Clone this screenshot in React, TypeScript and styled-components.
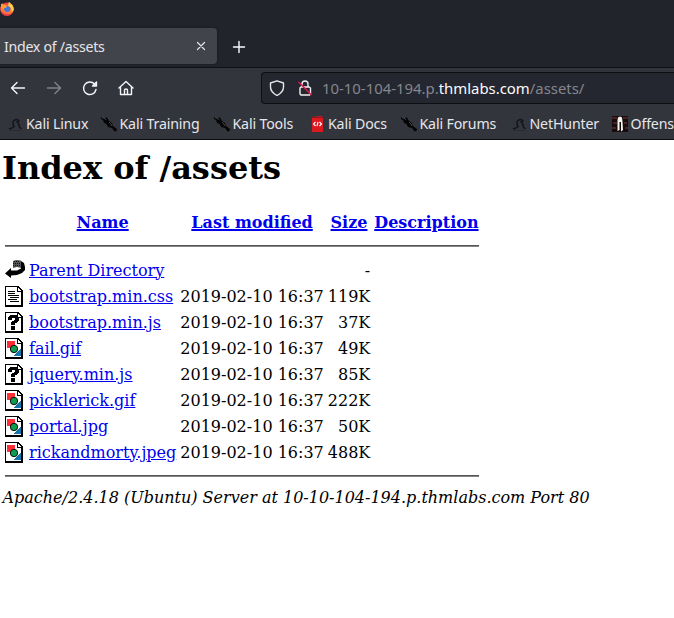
import React from 'react';
import styled, { createGlobalStyle } from 'styled-components';

const Global = createGlobalStyle`
  html, body { margin: 0; padding: 0; background: #fff; }
  body { overflow: hidden; }
`;

const Window = styled.div`
  width: 674px;
  height: 618px;
  overflow: hidden;
  background: #fff;
`;

const Chrome = styled.header`
  font: 14.2px/20px 'Noto Sans', sans-serif;
  letter-spacing: -0.16px;
  color: #e6e6ea;
  background: #33353d;
`;

const TitleBar = styled.div`
  height: 28px;
  background: #22242c;
  svg { display: block; }
`;

const TabStrip = styled.div`
  display: flex;
  height: 39px;
  background: #22242c;
  border-bottom: 1px solid #0f1014;
`;

const Tab = styled.div`
  box-sizing: border-box;
  display: flex;
  align-items: center;
  justify-content: space-between;
  width: 217px;
  height: 36px;
  padding: 0 9px 0 4px;
  border-radius: 0 4px 4px 0;
  background: #42444b;
  box-shadow: 0 0 3px rgba(0, 0, 0, 0.35);
`;

const TabTitle = styled.span`
  padding-top: 2px;
  letter-spacing: -0.29px;
`;

const NewTab = styled.div`
  padding: 11px 0 0 14px;
  line-height: 0;
  color: #fbfbfe;
`;

const NavBar = styled.nav`
  display: flex;
  align-items: center;
  height: 40px;
`;

const NavButton = styled.div<{ $dim?: boolean }>`
  display: flex;
  flex: 0 0 36px;
  justify-content: center;
  color: #f5f5f7;
  opacity: ${(p) => (p.$dim ? 0.4 : 1)};
`;

const AddressBar = styled.div`
  box-sizing: border-box;
  display: flex;
  align-items: center;
  flex: 1;
  height: 32px;
  margin-left: 117px;
  padding-left: 7px;
  border: 1px solid #0e0f13;
  border-right: 0;
  border-radius: 4px 0 0 4px;
  background: #242630;
`;

const LockSlot = styled.span`
  display: flex;
  margin-left: 12px;
`;

const Url = styled.span`
  margin-left: 9px;
  font-size: 14.9px;
  letter-spacing: 0;
  color: #85868e;
  white-space: nowrap;
  b { font-weight: 400; color: #fbfbfe; }
`;

const Bookmarks = styled.div`
  box-sizing: border-box;
  display: flex;
  align-items: center;
  height: 32px;
  padding: 1px 0 0 7px;
  border-bottom: 1px solid #0b0c0f;
  white-space: nowrap;
`;

const Bookmark = styled.span<{ $width: number }>`
  display: flex;
  flex: 0 0 ${(p) => p.$width}px;
  align-items: center;
  gap: 3px;
`;

const Page = styled.main`
  padding-left: 2px;
  font: 16px/19px 'DejaVu Serif', serif;
  color: #000;
  a { color: #0000ee; text-decoration: underline; }
`;

const Heading = styled.h1`
  margin: 0;
  padding-top: 9px;
  font-size: 32px;
  line-height: 38px;
`;

const Listing = styled.table`
  margin-top: 21px;
  border-collapse: separate;
  border-spacing: 2px;
  white-space: nowrap;
`;

const Cell = styled.td<{ $right?: boolean }>`
  padding: 1px;
  vertical-align: middle;
  text-align: ${(p) => (p.$right ? 'right' : 'left')};
`;

const HeadCell = styled.th`
  height: 22px;
  padding: 1px;
  a { text-decoration-thickness: 2px; }
`;

const IconCell = styled.td`
  width: 20px;
  height: 22px;
  padding: 1px;
  line-height: 0;
  svg { display: block; }
`;

const Rule = styled.hr`
  margin: 8px 0;
  border: 0;
  border-top: 1px solid #555;
  border-bottom: 1px solid #858585;
`;

const Address = styled.address`
  font-style: italic;
  text-indent: 0.5px;
`;

const Line = ({ d, size = 16, weight = 1.4 }: { d: string; size?: number; weight?: number }) => (
  <svg width={size} height={size} viewBox="0 0 16 16" fill="none" stroke="currentColor" strokeWidth={weight} strokeLinecap="round" strokeLinejoin="round">
    <path d={d} />
  </svg>
);

const Firefox = () => (
  <svg width="15" height="17" viewBox="0 0 15 17">
    <circle cx="7" cy="9.300" r="6.700" fill="#f5404c" />
    <path d="M0.500 8 1.500 4l1.500 1.500L5 4l2 2 2-4 3.500 3 1.300 4-1 3-3 2-5-.5L1 11z" fill="#ff7a35" />
    <path d="m9 2 4 4 .8 4-2 2-.8-4-3-2z" fill="#ffcd4d" />
    <circle cx="7.200" cy="9" r="3" fill="#3b78e2" />
    <path d="m1 4 1.500-.5L4 5l3 .8L6 8H4L3 9 1 8z" fill="#ff9a36" />
  </svg>
);

const Dragon = () => (
  <svg width="16" height="16" viewBox="0 0 16 16">
    <path d="M2 13q4-1 5-2.500Q5 7 7 4.500q2.500-2 4.500 0L12 6M9.500 5Q12.500 8 12.500 11l2 2" fill="none" stroke="#15161a" strokeWidth="1.600" />
    <path d="M2 14.500h12" stroke="#292b31" />
  </svg>
);

const Kali = () => (
  <svg width="16" height="16" viewBox="0 0 16 16">
    <path d="m0 1 3 1 3-.5L8 5l3 2 1 3 4 3-.5 2-2 .500L11 12l-4-1-1.500-3L3 7 2 4 0 3z" fill="#050506" />
    <path d="m1 1.500 3 1 1 1.500M8 6l2 2 1 2" stroke="#707176" strokeWidth=".6" fill="none" />
  </svg>
);

const Docs = () => (
  <svg width="16" height="16" viewBox="0 0 16 16">
    <path d="M2 1 12 0l2 1v15H2z" fill="#db1a20" />
    <path d="M2 1h1v15H2z" fill="#173e7c" />
    <path d="M3 1.500h11" stroke="#8c171b" />
    <path d="m6.500 6-2 2 2 2m4-4 2 2-2 2M9 6 8 10" stroke="#fff" strokeWidth="1.100" fill="none" />
  </svg>
);

const Offensive = () => (
  <svg width="16" height="16" viewBox="0 0 16 16">
    <path d="M0 0h16v16H0z" fill="#170c0d" />
    <path d="M0 2h5M11 2h5M1 7h4M12 7h3M0 12h4M13 12h3" stroke="#482322" strokeWidth="2" />
    <path d="M5.500 4 6 1.500 8 .5l2 1 .5 4 .5 8.500-2 1.500V6H7.500v8l-2 1z" fill="#f4f1ef" />
  </svg>
);

const marks: Record<string, React.FC> = { dragon: Dragon, kali: Kali, docs: Docs, offensive: Offensive };

const bookmarks = [
  { label: 'Kali Linux', icon: 'dragon', width: 93.5 },
  { label: 'Kali Training', icon: 'kali', width: 113 },
  { label: 'Kali Tools', icon: 'kali', width: 95.5 },
  { label: 'Kali Docs', icon: 'docs', width: 91.5 },
  { label: 'Kali Forums', icon: 'kali', width: 110 },
  { label: 'NetHunter', icon: 'dragon', width: 101 },
  { label: 'Offens', icon: 'offensive', width: 62 },
];

const Sheet = ({ children }: { children: React.ReactNode }) => (
  <svg width="20" height="22" viewBox="0 -1 20 22" shapeRendering="crispEdges">
    <path d="M0 0h13l5 5v16H0z" fill="#000" />
    <path d="M1 1h11v5h4v13H1z" fill="#fff" />
    <path d="M13 2v3h3z" fill="#fff" />
    {children}
  </svg>
);

const BackIcon = () => (
  <svg width="20" height="22" viewBox="0 0 20 22">
    <path d="M8 2 11 1l5 .5V9l-4-1-4 1z" fill="#555" />
    <path d="M9 2.500h6M8 4.500h8M8 6.500h8" stroke="#111" strokeDasharray="1 1" />
    <path d="m16 2 3 2 1 4v3l-3 3-5 2-6 .5V19L0 14.500 6 9v2.500h6l4-2z" fill="#000" />
  </svg>
);

const TextIcon = () => (
  <Sheet><path d="M3 5.500h7M3 7.500h7M3 9.500h11M5 11.500h9M3 13.500h9M5 15.500h9" stroke="#000" /></Sheet>
);

const UnknownIcon = () => (
  <Sheet>
    <path d="M3 5h1V4h1V3h7v1h1v1h1v4h-1v1h-1v1h-2v2H6v-3h1V9h2V8h1V6H7v2H3zM6 14h4v4H6z" fill="#000" />
  </Sheet>
);

const ImageIcon = () => (
  <Sheet>
    <path d="M2 3h8v7H2z" fill="#ff3035" />
    <path d="M16 10v8H8z" fill="#1474ac" />
    <circle cx="9" cy="11" r="3.700" fill="#109c50" stroke="#000" strokeWidth=".9" shapeRendering="auto" />
  </Sheet>
);

const fileIcons: Record<string, React.FC> = { back: BackIcon, text: TextIcon, unknown: UnknownIcon, image: ImageIcon };

const stamp = '2019-02-10 16:37';
const files = [
  { name: 'Parent Directory', icon: 'back', date: '', size: '-' },
  { name: 'bootstrap.min.css', icon: 'text', date: stamp, size: '119K' },
  { name: 'bootstrap.min.js', icon: 'unknown', date: stamp, size: '37K' },
  { name: 'fail.gif', icon: 'image', date: stamp, size: '49K' },
  { name: 'jquery.min.js', icon: 'unknown', date: stamp, size: '85K' },
  { name: 'picklerick.gif', icon: 'image', date: stamp, size: '222K' },
  { name: 'portal.jpg', icon: 'image', date: stamp, size: '50K' },
  { name: 'rickandmorty.jpeg', icon: 'image', date: stamp, size: '488K' },
];

export default function App() {
  return (
    <Window>
      <Global />
      <Chrome>
        <TitleBar><Firefox /></TitleBar>
        <TabStrip>
          <Tab>
            <TabTitle>Index of /assets</TabTitle>
            <Line size={14} d="M4 4l8 8M12 4l-8 8" />
          </Tab>
          <NewTab><Line d="M8 2.500v11M2.500 8h11" /></NewTab>
        </TabStrip>
        <NavBar>
          <NavButton><Line d="M14.500 8H1.500M7 2.500 1.500 8 7 13.500" /></NavButton>
          <NavButton $dim><Line d="M1.500 8h13M9 2.500 14.500 8 9 13.500" /></NavButton>
          <NavButton><Line d="M14 9.500A6.300 6.300 0 1 1 12.500 4L14 5.500M14.500 2v4h-4z" /></NavButton>
          <NavButton><Line d="M1 8l7-6.500L15 8M2.500 7v7.500h11V7M6.500 14V10q0-1 1.500-1t1.500 1v4" /></NavButton>
          <AddressBar>
            <Line d="M8 .8 14.500 3v4q0 5-6.500 8.500Q1.500 12 1.500 7V3z" />
            <LockSlot>
              <svg width="16" height="18" viewBox="0 0 16 18" fill="none" stroke="#f0f0f2" strokeWidth="1.400">
                <path d="M5 8V5q0-3 3-3t3 3v3M3 9l1-1h8l1.500 1v6l-1 1H4l-1-1z" />
                <path d="m1.500 3 13 13" stroke="#e2164b" />
              </svg>
            </LockSlot>
            <Url>10-10-104-194.p.<b>thmlabs.com</b>/assets/</Url>
          </AddressBar>
        </NavBar>
        <Bookmarks>
          {bookmarks.map((b) => {
            const Icon = marks[b.icon];
            return <Bookmark key={b.label} $width={b.width}><Icon />{b.label}</Bookmark>;
          })}
        </Bookmarks>
      </Chrome>
      <Page>
        <Heading>Index of /assets</Heading>
        <Listing>
          <tbody>
            <tr>
              <HeadCell />
              {['Name', 'Last modified', 'Size', 'Description'].map((h) => (
                <HeadCell key={h}><a href="#">{h}</a></HeadCell>
              ))}
            </tr>
            <tr><Cell colSpan={5}><Rule /></Cell></tr>
            {files.map((f) => {
              const Icon = fileIcons[f.icon];
              return (
                <tr key={f.name}>
                  <IconCell><Icon /></IconCell>
                  <Cell><a href="#">{f.name}</a></Cell>
                  <Cell $right>{f.date}</Cell>
                  <Cell $right>{f.size}</Cell>
                  <Cell />
                </tr>
              );
            })}
            <tr><Cell colSpan={5}><Rule /></Cell></tr>
          </tbody>
        </Listing>
        <Address>Apache/2.4.18 (Ubuntu) Server at 10-10-104-194.p.thmlabs.com Port 80</Address>
      </Page>
    </Window>
  );
}
